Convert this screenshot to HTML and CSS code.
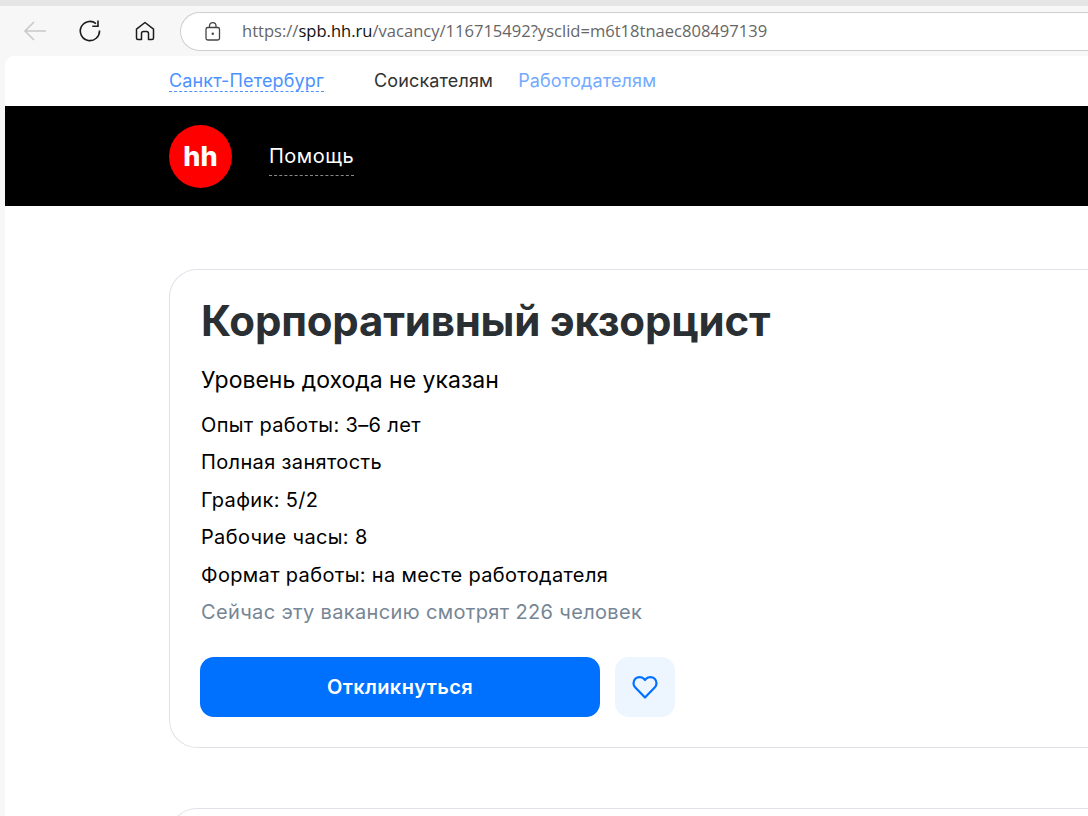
FILE: index.html
```html
<!DOCTYPE html>
<html lang="en">
<head>
    <meta charset="UTF-8">
    <title>Корпоративный экзорцист</title>
    <link rel="stylesheet" href="styles.css">
</head>
<body>
    <div class="browser-top"></div>
    <div class="toolbar">
        <svg class="tool-icon back" width="26" height="26" viewBox="0 0 26 26"><path d="M24 13H3M12 4l-9 9 9 9" fill="none" stroke="#c9c9c9" stroke-width="1.6"/></svg>
        <svg class="tool-icon reload" width="24" height="24" viewBox="0 0 24 24"><path d="M20.5 11.5A9.6 9.6 0 1 1 17 4.6M19 1.5v5.7h-5.7" fill="none" stroke="#1c1c1c" stroke-width="1.6"/></svg>
        <svg class="tool-icon home" width="22" height="22" viewBox="0 0 22 22"><path d="M2.5 9.2 11 2.5l8.500 6.700V18a1.500 1.500 0 0 1-1.500 1.500h-3.500V13.500a2 2 0 0 0-2-2H9.500a2 2 0 0 0-2 2v6H4A1.500 1.500 0 0 1 2.500 18z" fill="none" stroke="#1c1c1c" stroke-width="1.500" stroke-linejoin="round"/></svg>
        <div class="address">
            <svg class="lock" width="18" height="20" viewBox="0 0 18 20"><rect x="3" y="6.500" width="13.500" height="12.500" rx="1.800" fill="none" stroke="#444" stroke-width="1.300"/><path d="M6.500 6.500V4.800a3.200 3.200 0 0 1 6.500 0v1.700" fill="none" stroke="#444" stroke-width="1.300"/><circle cx="9.800" cy="12.700" r="1.200" fill="#444"/></svg>
            <span class="url">https://<b>spb.hh.ru</b>/vacancy/116715492?ysclid=m6t18tnaec808497139</span>
        </div>
    </div>

    <div class="page">
        <div class="top-links">
            <a class="city">Санкт-Петербург</a>
            <a class="seeker">Соискателям</a>
            <a class="employer">Работодателям</a>
        </div>
        <div class="black-bar">
            <div class="logo">hh</div>
            <a class="help">Помощь</a>
        </div>
        <div class="content">
            <div class="card">
                <h1>Корпоративный экзорцист</h1>
                <p class="salary">Уровень дохода не указан</p>
                <p class="row">Опыт работы: 3–6 лет</p>
                <p class="row">Полная занятость</p>
                <p class="row">График: 5/2</p>
                <p class="row">Рабочие часы: 8</p>
                <p class="row">Формат работы: на месте работодателя</p>
                <p class="row muted">Сейчас эту вакансию смотрят 226 человек</p>
                <div class="actions">
                    <button class="apply">Откликнуться</button>
                    <button class="fav">
                        <svg width="28" height="28" viewBox="0 0 28 28"><path d="M14 24.500 4.300 14.600a6.300 6.300 0 0 1 0-8.800 6.100 6.100 0 0 1 8.600 0L14 7l1.100-1.200a6.100 6.100 0 0 1 8.600 0 6.300 6.300 0 0 1 0 8.800z" fill="none" stroke="#0070ff" stroke-width="2.200" stroke-linejoin="round"/></svg>
                    </button>
                </div>
            </div>
            <div class="card next"></div>
        </div>
    </div>
</body>
</html>
```

FILE: styles.css
```css
body {
    margin: 0;
    height: 816px;
    overflow: hidden;
    background-color: #f7f7f7;
    font-family: Inter, "Liberation Sans", sans-serif;
}

.browser-top {
    height: 6px;
    background-color: #e5e5e5;
}

.toolbar {
    display: flex;
    align-items: center;
    height: 50px;
}

.tool-icon {
    flex: none;
}

.back {
    margin-left: 22px;
}

.reload {
    margin-left: 31px;
}

.home {
    margin-left: 31px;
}

/* right end of the field runs off the window, so no right border */
.address {
    display: flex;
    flex: 1;
    align-items: center;
    height: 37px;
    margin-left: 24px;
    padding-left: 22px;
    background-color: #fff;
    border: 1px solid #cfcfcf;
    border-right: none;
    border-radius: 20px 0 0 20px;
}

.url {
    margin-left: 21px;
    margin-bottom: 2px;
    font-family: "Open Sans", sans-serif;
    font-size: 16.560px;
    color: #666;
    white-space: nowrap;
}

.url b {
    font-weight: 400;
    color: #111;
}

.page {
    height: 760px;
    margin-left: 5px;
    overflow: hidden;
    background-color: #fff;
    border-top-left-radius: 9px;
}

.top-links {
    display: flex;
    align-items: center;
    height: 50px;
    padding-left: 164px;
    font-size: 18px;
    letter-spacing: 0.15px;
}

.city {
    color: #4c92ff;
    border-bottom: 1px dashed #4c92ff;
    margin-right: 50px;
}

.seeker {
    color: #303233;
    border-bottom: 1px solid transparent;
    margin-right: 25px;
}

.employer {
    color: #74aaff;
    border-bottom: 1px solid transparent;
}

.black-bar {
    display: flex;
    align-items: center;
    height: 100px;
    padding-left: 164px;
    background-color: #000;
}

.logo {
    display: flex;
    align-items: center;
    justify-content: center;
    width: 63px;
    height: 63px;
    background-color: #f00;
    border-radius: 50%;
    color: #fff;
    font-size: 27px;
    font-weight: 800;
}

.help {
    margin-left: 37px;
    padding-bottom: 7px;
    margin-top: 7px;
    color: #fff;
    font-size: 20px;
    letter-spacing: 0.5px;
    border-bottom: 1px dashed #888;
}

.content {
    padding: 63px 0 0 164px;
}

.card {
    box-sizing: border-box;
    height: 479px;
    padding: 25px 31px;
    border: 1px solid #dfe3e8;
    border-right: none;
    border-radius: 28px 0 0 28px;
}

.card.next {
    margin-top: 60px;
}

h1 {
    margin: 0 0 16px;
    color: #2a2f33;
    font-size: 42px;
    letter-spacing: -0.2px;
    line-height: 52px;
    font-weight: 700;
}

.salary {
    margin: 0 0 10px;
    color: #000;
    font-size: 23px;
    line-height: 34px;
}

.row {
    margin: 0;
    color: #000;
    font-size: 20px;
    letter-spacing: 0.35px;
    line-height: 37.400px;
}

.row.muted {
    color: #768694;
}

.actions {
    display: flex;
    gap: 15px;
    margin: 26px 0 0 -1px;
}

.apply {
    width: 400px;
    height: 60px;
    background-color: #0070ff;
    color: #fff;
    border: none;
    border-radius: 14px;
    font-family: inherit;
    font-size: 20px;
    letter-spacing: 0.4px;
    font-weight: 600;
}

.fav {
    display: flex;
    align-items: center;
    justify-content: center;
    width: 60px;
    height: 60px;
    padding: 0;
    background-color: #edf5ff;
    border: none;
    border-radius: 14px;
}
```
